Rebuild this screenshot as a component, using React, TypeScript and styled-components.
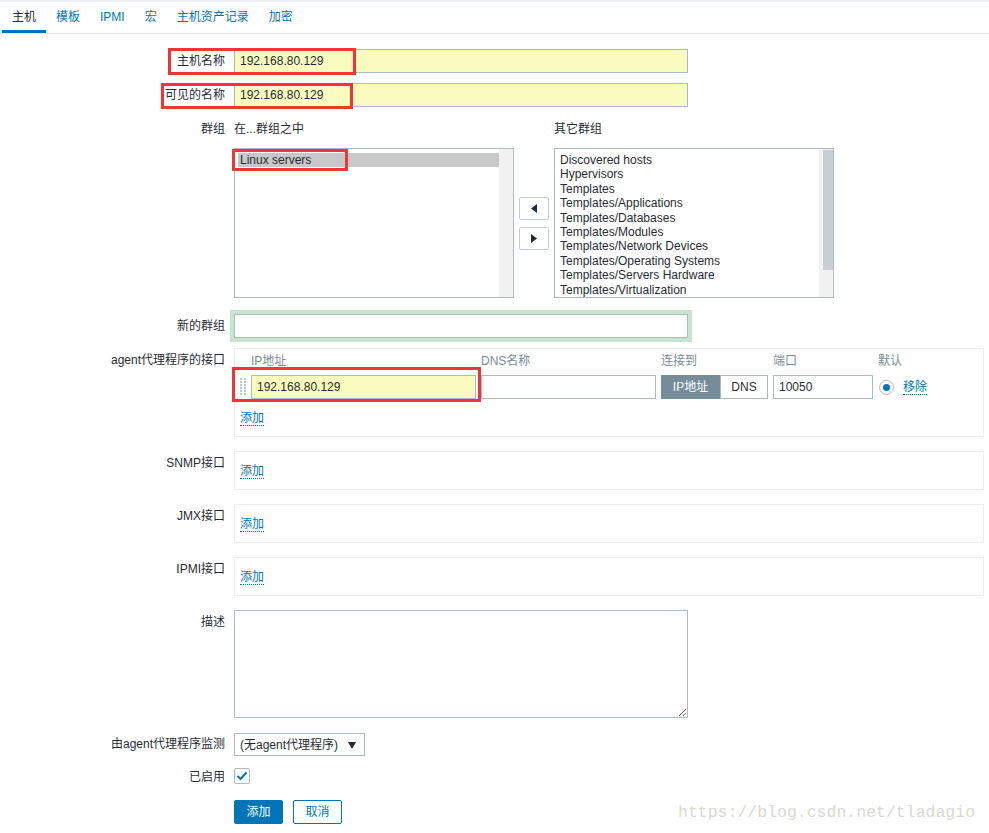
import React from "react";
import styled, { createGlobalStyle } from "styled-components";

const GlobalStyle = createGlobalStyle`
  html, body { margin: 0; padding: 0; background: #fff; }
  body {
    font-family: "Liberation Sans", Arial, "Noto Sans CJK SC", sans-serif;
    font-size: 12px;
    line-height: 14px;
    color: #1f2c33;
  }
  * { box-sizing: border-box; }
`;

const Page = styled.div`
  position: relative;
  width: 989px;
  height: 833px;
  overflow: hidden;
  background: #fff;
`;

const TabBar = styled.div`
  display: flex;
  height: 34px;
  padding-left: 2px;
  border-top: 2px solid #ebeef0;
  border-bottom: 1px solid #e3e7ea;
`;

const Tab = styled.div<{ $active?: boolean }>`
  height: 31px;
  padding: 8px 10px 0;
  line-height: 14px;
  white-space: nowrap;
  color: ${(p) => (p.$active ? "#1f2c33" : "#0275b8")};
  border-bottom: 3px solid ${(p) => (p.$active ? "#0275b8" : "transparent")};
`;

const Form = styled.div`
  display: flex;
  flex-direction: column;
  padding: 15px 5px 0 0;
`;

const Row = styled.div<{ $mt?: number }>`
  display: grid;
  grid-template-columns: 225px 1fr;
  column-gap: 9px;
  margin-top: ${(p) => p.$mt ?? 0}px;
`;

const Label = styled.div<{ $pt?: number }>`
  text-align: right;
  padding-top: ${(p) => p.$pt ?? 5}px;
  line-height: 14px;
  white-space: nowrap;
`;

const TextInput = styled.input<{ $w: number; $filled?: boolean; $glow?: boolean }>`
  display: block;
  width: ${(p) => p.$w}px;
  height: 24px;
  margin: 0;
  border: 1px solid #acbbc2;
  border-radius: 0;
  padding: 0 5px;
  font: inherit;
  color: #1f2c33;
  outline: none;
  background: ${(p) => (p.$filled ? "#fafcbf" : "#fff")};
  box-shadow: ${(p) => (p.$glow ? "0 0 0 4px #c7e4cc" : "none")};
`;

const GroupGrid = styled.div`
  display: grid;
  grid-template-columns: 280px 30px 280px;
  grid-template-rows: 31px 150px;
  column-gap: 5px;
`;

const GroupHead = styled.div`
  padding-top: 5px;
  line-height: 14px;
  white-space: nowrap;
`;

const ListBox = styled.div`
  height: 150px;
  border: 1px solid #acbbc2;
  display: flex;
  overflow: hidden;
`;

const ListItems = styled.div`
  flex: 1;
  padding: 4px 0 0 3px;
  overflow: hidden;
`;

const ScrollTrack = styled.div`
  width: 14px;
  flex: none;
  background: #f1f1f1;
  display: flex;
  justify-content: flex-end;
  padding-top: 1px;
`;

const ScrollThumb = styled.div<{ $h: number }>`
  width: 10px;
  height: ${(p) => p.$h}px;
  background: #c8ced2;
`;

const ListItem = styled.div<{ $selected?: boolean }>`
  padding-left: 2px;
  line-height: 14.4px;
  white-space: nowrap;
  background: ${(p) => (p.$selected ? "#c8c8c8" : "transparent")};
`;

const MoveButtons = styled.div`
  display: flex;
  flex-direction: column;
  justify-content: center;
  gap: 7px;
`;

const MoveButton = styled.div`
  width: 30px;
  height: 23px;
  border: 1px solid #c3ccd1;
  border-radius: 2px;
  background: #fff;
  display: flex;
  align-items: center;
  justify-content: center;
`;

const IfaceBox = styled.div`
  border: 1px solid #ebeef0;
  padding: 5px 5px 10px;
`;

const EmptyBox = styled.div`
  border: 1px solid #ebeef0;
  padding: 12px 5px 10px;
  line-height: 15px;
`;

const IfaceGrid = styled.div`
  display: grid;
  grid-template-columns: 6px 225px 175px 107px 100px auto;
  column-gap: 5px;
  align-items: center;
`;

const ColHead = styled.div`
  color: #768d99;
  line-height: 14px;
  padding-bottom: 7px;
  white-space: nowrap;
`;

const AddRow = styled.div`
  margin-top: 12px;
  line-height: 15px;
`;

const Link = styled.span`
  color: #0275b8;
  border-bottom: 1px dotted #0275b8;
  white-space: nowrap;
`;

const Toggle = styled.div`
  display: flex;
  height: 24px;
`;

const ToggleBtn = styled.div<{ $on?: boolean; $w: number }>`
  width: ${(p) => p.$w}px;
  height: 24px;
  line-height: 22px;
  text-align: center;
  border: 1px solid ${(p) => (p.$on ? "#768d99" : "#acbbc2")};
  background: ${(p) => (p.$on ? "#768d99" : "#fff")};
  color: ${(p) => (p.$on ? "#fff" : "#1f2c33")};
`;

const DefaultCell = styled.div`
  display: flex;
  align-items: center;
  gap: 9px;
  padding-left: 1px;
`;

const Radio = styled.span`
  width: 15px;
  height: 15px;
  border: 1px solid #acbbc2;
  border-radius: 50%;
  display: inline-flex;
  align-items: center;
  justify-content: center;
  background: #fff;
  &::after {
    content: "";
    width: 7px;
    height: 7px;
    border-radius: 50%;
    background: #0275b8;
  }
`;

const TextArea = styled.textarea`
  display: block;
  width: 454px;
  height: 108px;
  margin: 0;
  border: 1px solid #acbbc2;
  border-radius: 0;
  padding: 5px;
  font: inherit;
  resize: both;
  outline: none;
`;

const SelectBox = styled.div`
  width: 131px;
  height: 23px;
  border: 1px solid #acbbc2;
  display: flex;
  align-items: center;
  justify-content: space-between;
  padding: 0 8px 0 5px;
  white-space: nowrap;
`;

const CheckBox = styled.div`
  width: 16px;
  height: 16px;
  border: 1px solid #acbbc2;
  border-radius: 2px;
  display: flex;
  align-items: center;
  justify-content: center;
  background: #fff;
`;

const Buttons = styled.div`
  display: flex;
  gap: 10px;
`;

const Button = styled.button<{ $primary?: boolean }>`
  width: 49px;
  height: 24px;
  margin: 0;
  padding: 0;
  font: inherit;
  border-radius: 2px;
  border: 1px solid #0275b8;
  background: ${(p) => (p.$primary ? "#0275b8" : "#fff")};
  color: ${(p) => (p.$primary ? "#fff" : "#0275b8")};
`;

const Annotation = styled.div<{ $x: number; $y: number; $w: number; $h: number }>`
  position: absolute;
  left: ${(p) => p.$x}px;
  top: ${(p) => p.$y}px;
  width: ${(p) => p.$w}px;
  height: ${(p) => p.$h}px;
  border: 3px solid #ef3535;
  pointer-events: none;
`;

const Watermark = styled.div`
  position: absolute;
  left: 678px;
  top: 803px;
  font-family: "Liberation Mono", "Courier New", monospace;
  font-size: 16.5px;
  line-height: 20px;
  color: #d9d9d2;
  white-space: nowrap;
`;

const DragHandle = () => (
  <svg width="6" height="18" viewBox="0 0 6 18">
    {[0, 3, 6, 9, 12, 15].map((y) => (
      <g key={y} fill="#bcc5ca">
        <rect x="0" y={y} width="2" height="2" />
        <rect x="4" y={y} width="2" height="2" />
      </g>
    ))}
  </svg>
);

const ArrowLeft = () => (
  <svg width="6" height="9" viewBox="0 0 6 9">
    <polygon points="6,0 6,9 0,4.5" fill="#1f2c33" />
  </svg>
);

const ArrowRight = () => (
  <svg width="6" height="9" viewBox="0 0 6 9">
    <polygon points="0,0 0,9 6,4.5" fill="#1f2c33" />
  </svg>
);

const DownArrow = () => (
  <svg width="8" height="8" viewBox="0 0 8 8">
    <polygon points="0,1 8,1 4,8" fill="#1f2c33" />
  </svg>
);

const Check = () => (
  <svg width="12" height="10" viewBox="0 0 12 10">
    <polyline points="1.5,5 4.5,8 10.5,1.5" fill="none" stroke="#0275b8" strokeWidth="2" />
  </svg>
);

const otherGroups = [
  "Discovered hosts",
  "Hypervisors",
  "Templates",
  "Templates/Applications",
  "Templates/Databases",
  "Templates/Modules",
  "Templates/Network Devices",
  "Templates/Operating Systems",
  "Templates/Servers Hardware",
  "Templates/Virtualization",
];

const tabs = ["主机", "模板", "IPMI", "宏", "主机资产记录", "加密"];

export default function App() {
  return (
    <Page>
      <GlobalStyle />
      <TabBar>
        {tabs.map((t, i) => (
          <Tab key={t} $active={i === 0}>
            {t}
          </Tab>
        ))}
      </TabBar>

      <Form>
        <Row>
          <Label>主机名称</Label>
          <TextInput $w={454} $filled readOnly defaultValue="192.168.80.129" />
        </Row>

        <Row $mt={10}>
          <Label>可见的名称</Label>
          <TextInput $w={454} $filled readOnly defaultValue="192.168.80.129" />
        </Row>

        <Row $mt={10}>
          <Label>群组</Label>
          <GroupGrid>
            <GroupHead>在...群组之中</GroupHead>
            <div />
            <GroupHead>其它群组</GroupHead>
            <ListBox>
              <ListItems>
                <ListItem $selected>Linux servers</ListItem>
              </ListItems>
              <ScrollTrack />
            </ListBox>
            <MoveButtons>
              <MoveButton>
                <ArrowLeft />
              </MoveButton>
              <MoveButton>
                <ArrowRight />
              </MoveButton>
            </MoveButtons>
            <ListBox>
              <ListItems>
                {otherGroups.map((g) => (
                  <ListItem key={g}>{g}</ListItem>
                ))}
              </ListItems>
              <ScrollTrack>
                <ScrollThumb $h={120} />
              </ScrollTrack>
            </ListBox>
          </GroupGrid>
        </Row>

        <Row $mt={16}>
          <Label>新的群组</Label>
          <TextInput $w={454} $glow readOnly defaultValue="" />
        </Row>

        <Row $mt={10}>
          <Label>agent代理程序的接口</Label>
          <IfaceBox>
            <IfaceGrid>
              <div />
              <ColHead>IP地址</ColHead>
              <ColHead>DNS名称</ColHead>
              <ColHead>连接到</ColHead>
              <ColHead>端口</ColHead>
              <ColHead>默认</ColHead>

              <DragHandle />
              <TextInput $w={225} $filled readOnly defaultValue="192.168.80.129" />
              <TextInput $w={175} readOnly defaultValue="" />
              <Toggle>
                <ToggleBtn $on $w={59}>IP地址</ToggleBtn>
                <ToggleBtn $w={48}>DNS</ToggleBtn>
              </Toggle>
              <TextInput $w={100} readOnly defaultValue="10050" />
              <DefaultCell>
                <Radio />
                <Link>移除</Link>
              </DefaultCell>
            </IfaceGrid>
            <AddRow>
              <Link>添加</Link>
            </AddRow>
          </IfaceBox>
        </Row>

        <Row $mt={14}>
          <Label>SNMP接口</Label>
          <EmptyBox>
            <Link>添加</Link>
          </EmptyBox>
        </Row>

        <Row $mt={14}>
          <Label>JMX接口</Label>
          <EmptyBox>
            <Link>添加</Link>
          </EmptyBox>
        </Row>

        <Row $mt={14}>
          <Label>IPMI接口</Label>
          <EmptyBox>
            <Link>添加</Link>
          </EmptyBox>
        </Row>

        <Row $mt={14}>
          <Label>描述</Label>
          <TextArea readOnly defaultValue="" />
        </Row>

        <Row $mt={15}>
          <Label $pt={4}>由agent代理程序监测</Label>
          <SelectBox>
            <span>(无agent代理程序)</span>
            <DownArrow />
          </SelectBox>
        </Row>

        <Row $mt={12}>
          <Label $pt={2}>已启用</Label>
          <CheckBox>
            <Check />
          </CheckBox>
        </Row>

        <Row $mt={16}>
          <div />
          <Buttons>
            <Button $primary>添加</Button>
            <Button>取消</Button>
          </Buttons>
        </Row>
      </Form>

      <Annotation $x={168} $y={48} $w={188} $h={27} />
      <Annotation $x={161} $y={83} $w={192} $h={26} />
      <Annotation $x={232} $y={149} $w={116} $h={22} />
      <Annotation $x={232} $y={367} $w={249} $h={35} />

      <Watermark>https://blog.csdn.net/tladagio</Watermark>
    </Page>
  );
}
